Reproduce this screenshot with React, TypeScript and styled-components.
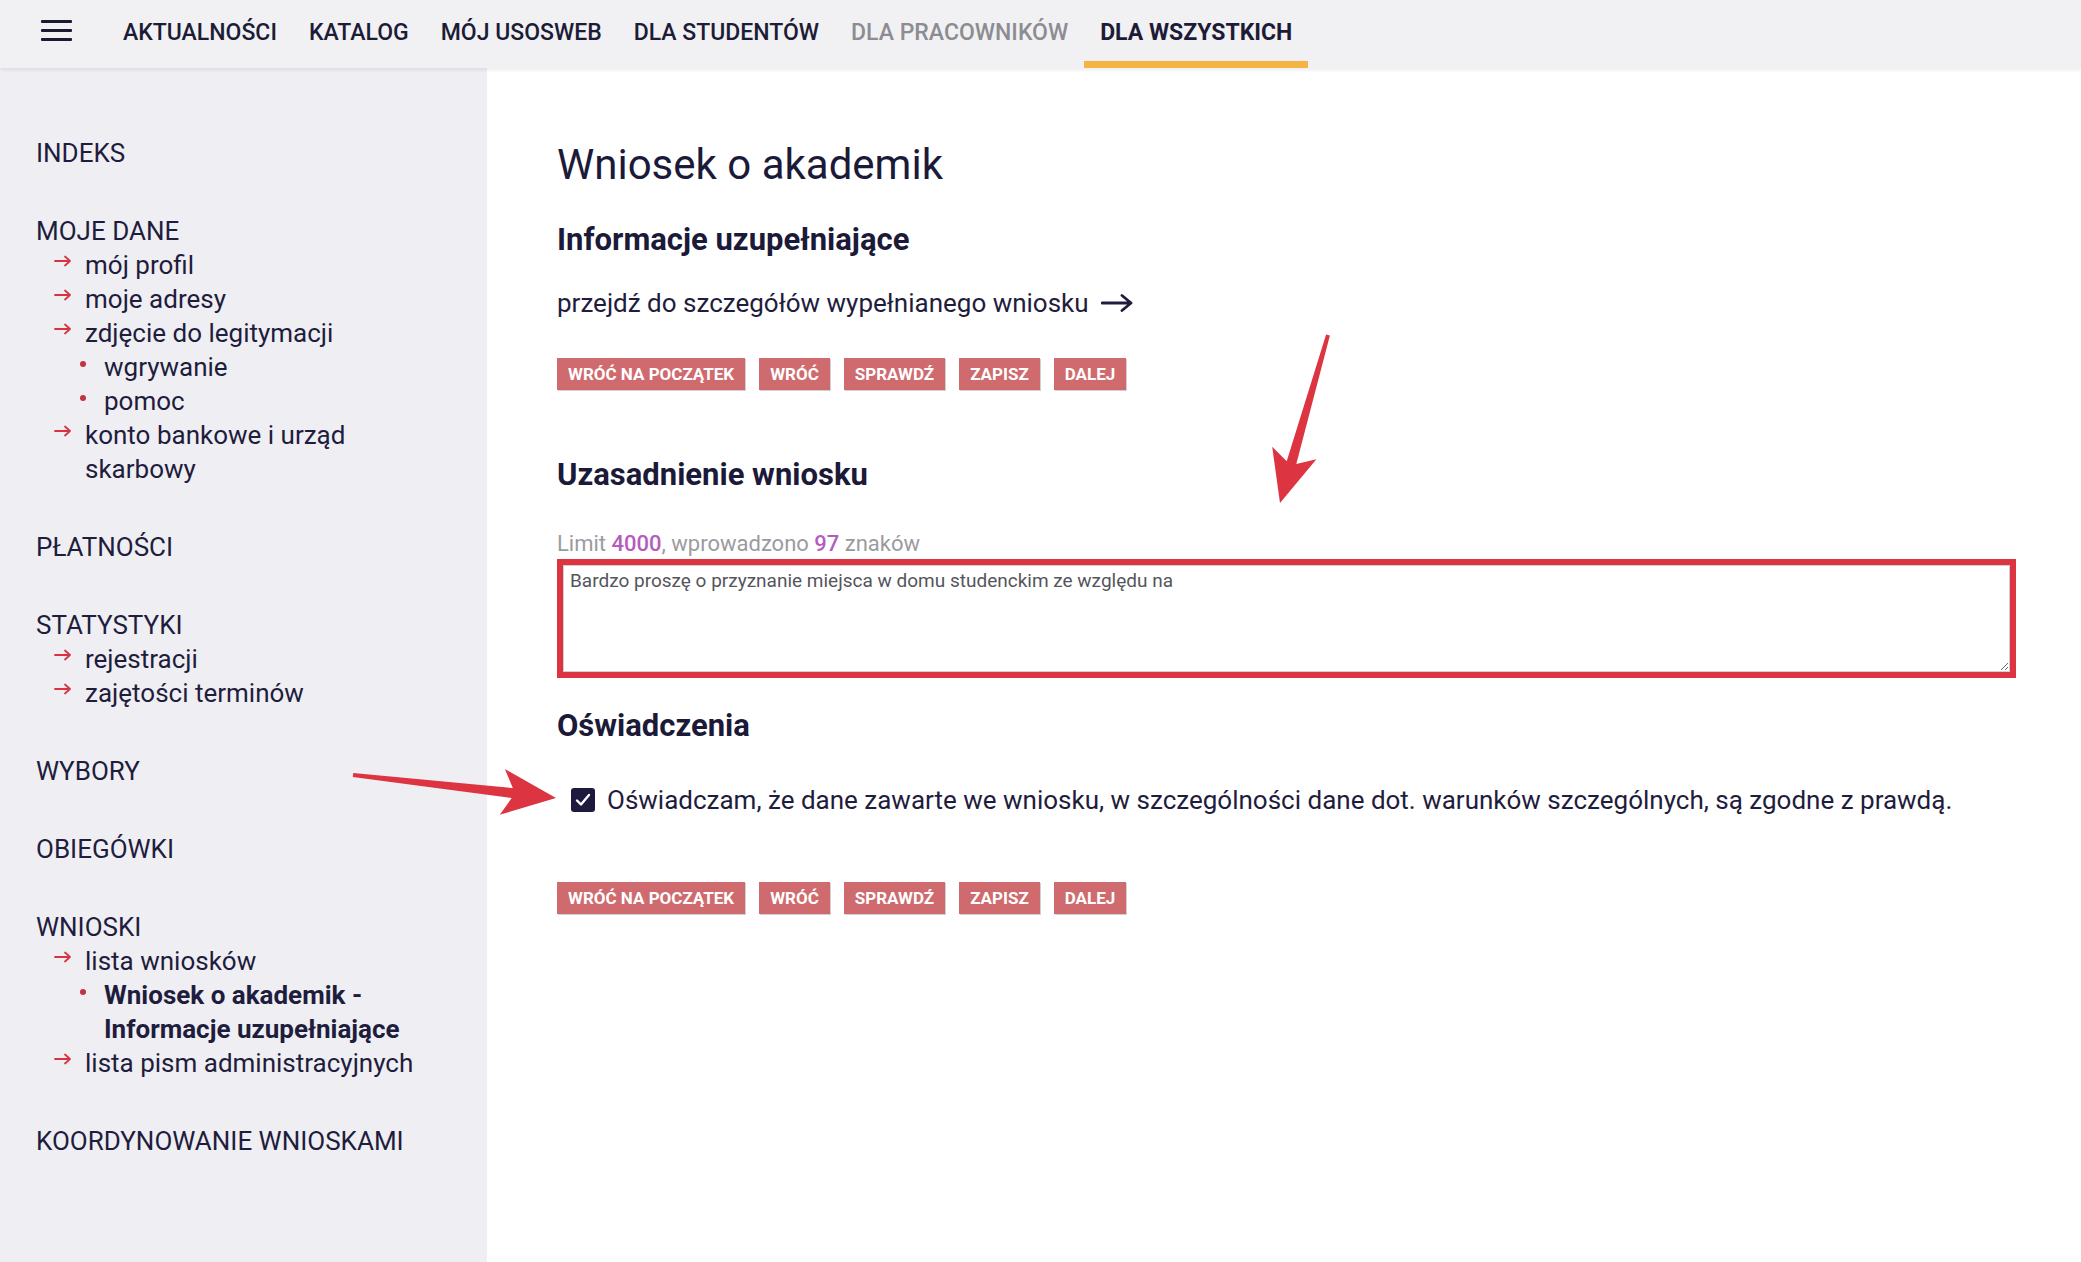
import React from "react";
import styled, { createGlobalStyle } from "styled-components";

const GlobalStyle = createGlobalStyle`
  html, body {
    margin: 0;
    padding: 0;
  }
  body {
    font-family: Roboto, "Liberation Sans", Arial, sans-serif;
    color: #1f1d3d;
    background: #ffffff;
  }
  * {
    box-sizing: border-box;
  }
`;

const Page = styled.div`
  position: relative;
  min-height: 100vh;
  display: flex;
  flex-direction: column;
`;

const TopBar = styled.header`
  position: relative;
  z-index: 1;
  height: 68px;
  flex-shrink: 0;
  display: flex;
  align-items: stretch;
  padding-left: 41px;
  background: #f1f1f4;
  box-shadow: 0 2px 4px rgba(0, 0, 0, 0.08);
`;

const MenuButton = styled.button`
  align-self: flex-start;
  margin-top: 20px;
  margin-right: 35px;
  width: 31px;
  padding: 0;
  border: none;
  background: none;
  display: flex;
  flex-direction: column;
  gap: 6px;
  span {
    display: block;
    height: 3px;
    background: #1b1a33;
    border-radius: 1px;
  }
`;

const NavItem = styled.a<{ $active?: boolean; $muted?: boolean }>`
  display: flex;
  align-items: center;
  padding: 4px 16px 0;
  font-size: 23px;
  font-weight: ${(p) => (p.$active ? 700 : 500)};
  color: ${(p) => (p.$muted ? "#8c8c92" : "#1d1c36")};
  text-decoration: none;
  border-bottom: 7px solid ${(p) => (p.$active ? "#f4b445" : "transparent")};
  white-space: nowrap;
`;

const Body = styled.div`
  flex: 1;
  display: flex;
`;

const Sidebar = styled.nav`
  width: 487px;
  flex-shrink: 0;
  background: #efeff3;
  padding: 68px 50px 40px 36px;
`;

const SideSection = styled.div`
  margin-bottom: 44px;
`;

const SideTitle = styled.div`
  font-size: 26px;
  line-height: 34px;
  color: #1f1d3d;
`;

const SideItem = styled.div<{ $indent: number; $bold?: boolean }>`
  display: flex;
  align-items: flex-start;
  padding-left: ${(p) => p.$indent}px;
  font-size: 26px;
  line-height: 34px;
  font-weight: ${(p) => (p.$bold ? 700 : 400)};
  color: #1f1d3d;
`;

const Marker = styled.span<{ $width: number; $gap: number }>`
  flex-shrink: 0;
  width: ${(p) => p.$width}px;
  height: 34px;
  margin-right: ${(p) => p.$gap}px;
  display: flex;
  align-items: center;
  justify-content: center;
`;

const Dot = styled.span`
  width: 6px;
  height: 6px;
  border-radius: 50%;
  background: #c0343d;
  margin-top: -6px;
`;

const Main = styled.main`
  flex: 1;
  padding: 72px 65px 40px 70px;
`;

const Title = styled.h1`
  margin: 0;
  font-size: 42px;
  line-height: 50px;
  font-weight: 400;
  color: #1b1a38;
`;

const Heading = styled.h2<{ $top: number }>`
  margin: ${(p) => p.$top}px 0 0;
  font-size: 31px;
  line-height: 36px;
  font-weight: 700;
  color: #1b1a38;
`;

const DetailsLink = styled.a`
  display: flex;
  align-items: center;
  gap: 12px;
  margin-top: 28px;
  font-size: 26px;
  line-height: 34px;
  color: #1f1d3d;
  text-decoration: none;
`;

const ButtonRow = styled.div<{ $top: number }>`
  display: flex;
  gap: 14px;
  margin-top: ${(p) => p.$top}px;
`;

const ActionButton = styled.button`
  height: 32px;
  padding: 0 11px;
  border: none;
  background: #cf6b6e;
  color: #ffffff;
  font-family: inherit;
  font-size: 17px;
  font-weight: 700;
  text-transform: uppercase;
  box-shadow: 1px 1px 0 rgba(0, 0, 0, 0.18);
`;

const LimitNote = styled.div`
  margin-top: 38px;
  font-size: 22px;
  line-height: 26px;
  color: #9b9b9f;
  strong {
    color: #b55cbd;
    font-weight: 500;
  }
`;

const HighlightFrame = styled.div`
  margin-top: 2px;
  border: 6px solid #dc3441;
`;

const Justification = styled.textarea`
  display: block;
  width: 100%;
  height: 107px;
  padding: 4px 6px;
  border: 1px solid #cfcfd3;
  font-family: inherit;
  font-size: 19px;
  line-height: 22px;
  color: #55555c;
  resize: vertical;
  outline: none;
`;

const StatementRow = styled.label`
  display: flex;
  align-items: center;
  margin-top: 39px;
  padding-left: 14px;
  font-size: 26px;
  line-height: 34px;
  color: #1f1d3d;
`;

const CheckBox = styled.span`
  flex-shrink: 0;
  width: 24px;
  height: 24px;
  margin-right: 12px;
  border-radius: 3px;
  background: #1d1b3d;
  display: flex;
  align-items: center;
  justify-content: center;
`;

const Annotations = styled.svg`
  position: absolute;
  top: 0;
  left: 0;
  width: 100%;
  height: 100%;
  pointer-events: none;
  z-index: 2;
`;

type SideEntry = { kind: "arrow" | "dot"; label: string; bold?: boolean };
type Section = { title: string; items?: SideEntry[] };

const sections: Section[] = [
  { title: "INDEKS" },
  {
    title: "MOJE DANE",
    items: [
      { kind: "arrow", label: "mój profil" },
      { kind: "arrow", label: "moje adresy" },
      { kind: "arrow", label: "zdjęcie do legitymacji" },
      { kind: "dot", label: "wgrywanie" },
      { kind: "dot", label: "pomoc" },
      { kind: "arrow", label: "konto bankowe i urząd skarbowy" },
    ],
  },
  { title: "PŁATNOŚCI" },
  {
    title: "STATYSTYKI",
    items: [
      { kind: "arrow", label: "rejestracji" },
      { kind: "arrow", label: "zajętości terminów" },
    ],
  },
  { title: "WYBORY" },
  { title: "OBIEGÓWKI" },
  {
    title: "WNIOSKI",
    items: [
      { kind: "arrow", label: "lista wniosków" },
      { kind: "dot", label: "Wniosek o akademik - Informacje uzupełniające", bold: true },
      { kind: "arrow", label: "lista pism administracyjnych" },
    ],
  },
  { title: "KOORDYNOWANIE WNIOSKAMI" },
];

const navItems = [
  { label: "AKTUALNOŚCI" },
  { label: "KATALOG" },
  { label: "MÓJ USOSWEB" },
  { label: "DLA STUDENTÓW" },
  { label: "DLA PRACOWNIKÓW", muted: true },
  { label: "DLA WSZYSTKICH", active: true },
];

const actions = ["Wróć na początek", "Wróć", "Sprawdź", "Zapisz", "Dalej"];

function SmallArrow() {
  return (
    <svg width="18" height="12" viewBox="0 0 18 12" style={{ marginTop: -8 }}>
      <path d="M1 6h15M11 1.5L16 6l-5 4.5" fill="none" stroke="#d8343f" strokeWidth="1.8" strokeLinecap="round" strokeLinejoin="round" />
    </svg>
  );
}

function LongArrow() {
  return (
    <svg width="32" height="20" viewBox="0 0 32 20">
      <path d="M1 10h29M21 2.5l9 7.5-9 7.5" fill="none" stroke="#1f1d3d" strokeWidth="2.8" strokeLinecap="round" strokeLinejoin="round" />
    </svg>
  );
}

// callout arrow: tapered shaft with a notched head, from (x1,y1) to tip (x2,y2)
function calloutPoints(x1: number, y1: number, x2: number, y2: number, headLen: number, headHalf: number) {
  const len = Math.hypot(x2 - x1, y2 - y1);
  const ux = (x2 - x1) / len;
  const uy = (y2 - y1) / len;
  const nx = -uy;
  const ny = ux;
  const at = (d: number, w: number) => `${(x2 - ux * d + nx * w).toFixed(1)},${(y2 - uy * d + ny * w).toFixed(1)}`;
  return [
    at(len, 2),
    at(headLen - 10, 5),
    at(headLen, headHalf),
    at(0, 0),
    at(headLen, -headHalf),
    at(headLen - 10, -5),
    at(len, -2),
  ].join(" ");
}

export default function App() {
  return (
    <Page>
      <GlobalStyle />
      <TopBar>
        <MenuButton aria-label="menu">
          <span />
          <span />
          <span />
        </MenuButton>
        {navItems.map((n) => (
          <NavItem key={n.label} href="#" $active={n.active} $muted={n.muted}>
            {n.label}
          </NavItem>
        ))}
      </TopBar>

      <Body>
        <Sidebar>
          {sections.map((s) => (
            <SideSection key={s.title}>
              <SideTitle>{s.title}</SideTitle>
              {s.items?.map((it) =>
                it.kind === "arrow" ? (
                  <SideItem key={it.label} $indent={17}>
                    <Marker $width={20} $gap={12}>
                      <SmallArrow />
                    </Marker>
                    <span>{it.label}</span>
                  </SideItem>
                ) : (
                  <SideItem key={it.label} $indent={44} $bold={it.bold}>
                    <Marker $width={6} $gap={18}>
                      <Dot />
                    </Marker>
                    <span>{it.label}</span>
                  </SideItem>
                )
              )}
            </SideSection>
          ))}
        </Sidebar>

        <Main>
          <Title>Wniosek o akademik</Title>
          <Heading $top={32}>Informacje uzupełniające</Heading>
          <DetailsLink href="#">
            przejdź do szczegółów wypełnianego wniosku <LongArrow />
          </DetailsLink>
          <ButtonRow $top={38}>
            {actions.map((a) => (
              <ActionButton key={a}>{a}</ActionButton>
            ))}
          </ButtonRow>

          <Heading $top={67}>Uzasadnienie wniosku</Heading>
          <LimitNote>
            Limit <strong>4000</strong>, wprowadzono <strong>97</strong> znaków
          </LimitNote>
          <HighlightFrame>
            <Justification
              defaultValue="Bardzo proszę o przyznanie miejsca w domu studenckim ze względu na "
              spellCheck={false}
            />
          </HighlightFrame>

          <Heading $top={30}>Oświadczenia</Heading>
          <StatementRow>
            <CheckBox>
              <svg width="16" height="14" viewBox="0 0 16 14">
                <path d="M2 7.5l4 4 8-9.5" fill="none" stroke="#ffffff" strokeWidth="2.4" strokeLinecap="round" strokeLinejoin="round" />
              </svg>
            </CheckBox>
            Oświadczam, że dane zawarte we wniosku, w szczególności dane dot. warunków szczególnych, są zgodne z prawdą.
          </StatementRow>
          <ButtonRow $top={65}>
            {actions.map((a) => (
              <ActionButton key={a}>{a}</ActionButton>
            ))}
          </ButtonRow>
        </Main>
      </Body>

      <Annotations>
        <polygon points={calloutPoints(1328, 335, 1280, 503, 52, 23)} fill="#dc3441" />
        <polygon points={calloutPoints(353, 775, 556, 798, 54, 23)} fill="#dc3441" />
      </Annotations>
    </Page>
  );
}
